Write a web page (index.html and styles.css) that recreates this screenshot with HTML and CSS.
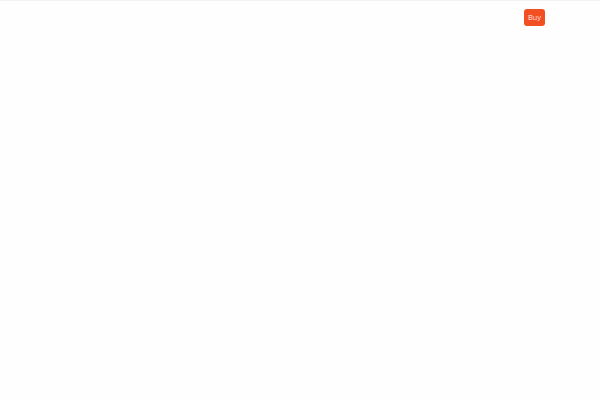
FILE: index.html
```html
<!DOCTYPE html>
<html lang="en">
<head>
<meta charset="utf-8">
<meta name="viewport" content="width=device-width, initial-scale=1">
<title>Buy</title>
<link rel="stylesheet" href="styles.css">
</head>
<body>
<header class="bar">
<button class="buy" type="button">Buy</button>
</header>
</body>
</html>
```
FILE: styles.css
```css
body {
  margin: 0;
  background: #fefefe;
  font-family: Roboto, "Liberation Sans", sans-serif;
}

.bar {
  display: flex;
  justify-content: flex-end;
  padding: 8px 55px;
  border-top: 1px solid #f3f3f3;
}

.buy {
  padding: 4px;
  border: 0;
  border-radius: 3px;
  background: #f25022;
  color: #fff;
  font: inherit;
  font-size: 8px;
  font-weight: 300;
  line-height: 9px;
}
```
